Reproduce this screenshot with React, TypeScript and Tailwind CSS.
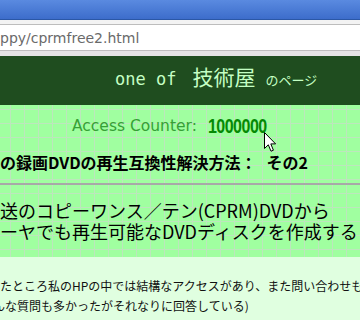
export default function App() {
  return (
    <div className="relative w-[360px] h-[320px] overflow-hidden bg-[#e0ffe0] font-['Noto_Sans_CJK_JP',sans-serif]">
      {/* browser chrome */}
      <div className="h-[20px] bg-gradient-to-b from-[#5a8ae0] to-[#3d6dcb] border-b border-[#2b57a6]" />
      <div className="h-[4px] bg-[#f3f3f3]" />
      <div className="h-[27px] bg-white border-y border-[#bdbdbd] flex items-center whitespace-nowrap">
        <span className="font-['DejaVu_Sans',sans-serif] text-[14px] leading-none text-[#6a6a6a]">ppy/cprmfree2.html</span>
      </div>
      <div className="h-[5px] bg-[#e4e4e4]" />

      {/* page header */}
      <div className="h-[49px] bg-[#1f4d1f] flex items-baseline pl-[115px] pt-[5px] text-[#c4ffc4] whitespace-nowrap">
        <span className="font-['DejaVu_Sans_Mono',monospace] text-[17px]">one of</span>
        <span className="ml-[16px] text-[21px]">技術屋</span>
        <span className="ml-[10px] text-[13px]">のページ</span>
      </div>

      {/* grid section */}
      <div className="bg-[#a0ffa0] bg-[linear-gradient(to_right,#bde6bd_1px,transparent_1px),linear-gradient(to_bottom,#bde6bd_1px,transparent_1px)] bg-[length:14px_14px] bg-[position:10px_4px] pt-[12px] pb-[15px] whitespace-nowrap">
        <div className="h-[20px] flex items-center pl-[72px]">
          <span className="font-['DejaVu_Sans',sans-serif] text-[15.5px] text-[#36a036]">Access Counter:</span>
          <span className="ml-[11px] inline-block scale-y-125 font-['Liberation_Sans',sans-serif] font-bold text-[16px] tracking-[-0.5px] text-[#058a05]">1000000</span>
        </div>
        <div className="mt-[15px] h-[20px] leading-[20px] text-[16px] font-bold text-black">
          の録画DVDの再生互換性解決方法：<span className="ml-[10px]">その2</span>
        </div>
        <div className="mt-[11px] h-[2px] bg-[#a8a8a8]" />
        <div className="mt-[15px] text-[18px] leading-[21px] text-black">
          <div>送のコピーワンス／テン(CPRM)DVDから</div>
          <div>ーヤでも再生可能なDVDディスクを作成する</div>
        </div>
      </div>

      {/* body */}
      <div className="pt-[19px] text-[12px] leading-[20px] text-[#111] whitespace-nowrap">
        <div>たところ私のHPの中では結構なアクセスがあり、また問い合わせも</div>
        <div className="-ml-[7px]">んな質問も多かったがそれなりに回答している)</div>
        <div>いたが、今回はさらに簡単な方法が見つかったので紹介する</div>
      </div>

      {/* mouse pointer */}
      <svg className="absolute left-[264px] top-[132px]" width="13" height="21" viewBox="0 0 13 21">
        <path d="M0.5 0.5 L0.5 16.5 L4.3 12.8 L7 19.2 L9.4 18.2 L6.8 11.9 L11.6 11.9 Z" fill="#fff" stroke="#000" strokeWidth="1" strokeLinejoin="miter" />
      </svg>
    </div>
  )
}
